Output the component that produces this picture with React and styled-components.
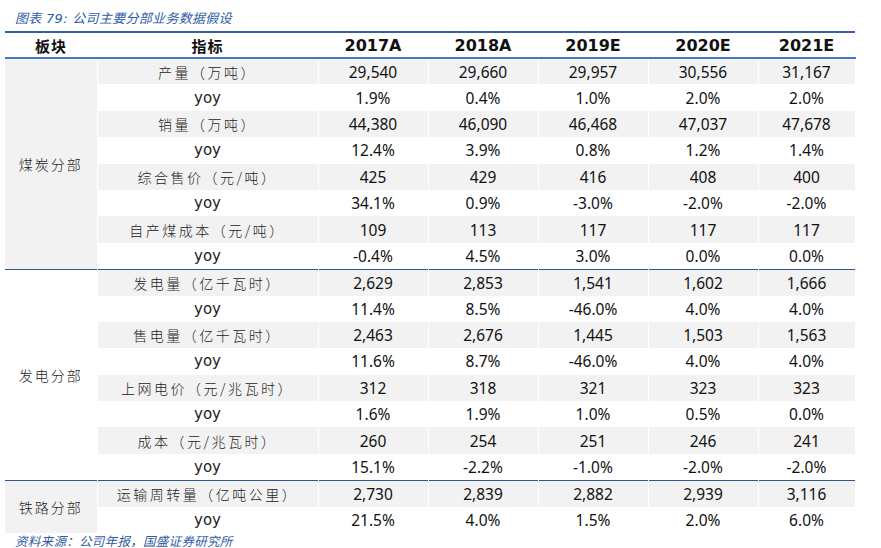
import React from 'react'
import styled, { createGlobalStyle } from 'styled-components'

const Global = createGlobalStyle`
  body {
    margin: 0;
    background: #fff;
    font-family: "Noto Sans", "Noto Sans CJK SC", sans-serif;
  }
`

const Page = styled.div`
  width: 881px;
  height: 548px;
  overflow: hidden;
`

const Caption = styled.div`
  height: 31px;
  box-sizing: border-box;
  padding: 10px 0 0 15px;
  font-family: "DejaVu Sans", "Noto Sans CJK SC", sans-serif;
  font-style: italic;
  font-size: 13px;
  line-height: 18px;
  color: #2f5ca6;
  letter-spacing: 0.3px;
`

const Table = styled.table`
  margin-left: 5px;
  width: 850px;
  border-collapse: collapse;
  table-layout: fixed;
`

const Col = styled.col`
  width: ${p => p.$w}px;
`

const HeadCell = styled.th`
  height: 24px;
  padding: 0;
  text-align: center;
  font-weight: 700;
  font-size: ${p => (p.$cn ? '15px' : '16px')};
  font-family: ${p =>
    p.$cn ? '"Noto Sans CJK SC", sans-serif' : '"DejaVu Sans", sans-serif'};
  letter-spacing: ${p => (p.$cn ? '1px' : '0')};
  color: #111;
  border-top: 2px solid #36609f;
  border-bottom: 2px solid #4a78c0;
`

const Section = styled.tbody`
  border-top: ${p => (p.$first ? 'none' : '1.5px solid #33558f')};
`

const Row = styled.tr`
  height: 26.4px;
  background: ${p => (p.$shade ? '#f2f2f2' : '#fff')};
`

const Group = styled.td`
  padding: 0;
  text-align: center;
  background: ${p => (p.$shade ? '#f2f2f2' : '#fff')};
  font-family: "Noto Sans CJK SC", sans-serif;
  font-weight: 300;
  font-size: 14px;
  letter-spacing: 2px;
  color: #222;
  border-right: 1px solid #fff;
`

const Label = styled.td`
  padding: 0;
  text-align: center;
  color: #222;
  border-right: 1px solid #fff;
  font-family: ${p =>
    p.$cn ? '"Noto Sans CJK SC", sans-serif' : '"DejaVu Sans", sans-serif'};
  font-weight: ${p => (p.$cn ? 300 : 400)};
  font-size: ${p => (p.$cn ? '14px' : '15px')};
  letter-spacing: ${p => (p.$cn ? '2.5px' : '0')};
`

const Value = styled.td`
  padding: 0;
  text-align: center;
  font-family: "Noto Sans", sans-serif;
  font-size: 15.5px;
  color: #111;
  border-right: 1px solid #fff;
`

const Note = styled.div`
  padding: 1px 0 0 15px;
  font-family: "DejaVu Sans", "Noto Sans CJK SC", sans-serif;
  font-style: italic;
  font-size: 12.5px;
  line-height: 16px;
  color: #2f5ca6;
  letter-spacing: 0.3px;
`

const widths = [92, 221, 110, 110, 110, 110, 97]
const years = ['2017A', '2018A', '2019E', '2020E', '2021E']

const sections = [
  {
    name: '煤炭分部',
    shade: true,
    rows: [
      ['产量（万吨）', '29,540', '29,660', '29,957', '30,556', '31,167'],
      ['yoy', '1.9%', '0.4%', '1.0%', '2.0%', '2.0%'],
      ['销量（万吨）', '44,380', '46,090', '46,468', '47,037', '47,678'],
      ['yoy', '12.4%', '3.9%', '0.8%', '1.2%', '1.4%'],
      ['综合售价（元/吨）', '425', '429', '416', '408', '400'],
      ['yoy', '34.1%', '0.9%', '-3.0%', '-2.0%', '-2.0%'],
      ['自产煤成本（元/吨）', '109', '113', '117', '117', '117'],
      ['yoy', '-0.4%', '4.5%', '3.0%', '0.0%', '0.0%'],
    ],
  },
  {
    name: '发电分部',
    shade: false,
    rows: [
      ['发电量（亿千瓦时）', '2,629', '2,853', '1,541', '1,602', '1,666'],
      ['yoy', '11.4%', '8.5%', '-46.0%', '4.0%', '4.0%'],
      ['售电量（亿千瓦时）', '2,463', '2,676', '1,445', '1,503', '1,563'],
      ['yoy', '11.6%', '8.7%', '-46.0%', '4.0%', '4.0%'],
      ['上网电价（元/兆瓦时）', '312', '318', '321', '323', '323'],
      ['yoy', '1.6%', '1.9%', '1.0%', '0.5%', '0.0%'],
      ['成本（元/兆瓦时）', '260', '254', '251', '246', '241'],
      ['yoy', '15.1%', '-2.2%', '-1.0%', '-2.0%', '-2.0%'],
    ],
  },
  {
    name: '铁路分部',
    shade: true,
    rows: [
      ['运输周转量（亿吨公里）', '2,730', '2,839', '2,882', '2,939', '3,116'],
      ['yoy', '21.5%', '4.0%', '1.5%', '2.0%', '6.0%'],
    ],
  },
]

export default function App() {
  return (
    <Page>
      <Global />
      <Caption>图表 79: 公司主要分部业务数据假设</Caption>
      <Table>
        <colgroup>
          {widths.map((w, i) => (
            <Col key={i} $w={w} />
          ))}
        </colgroup>
        <thead>
          <tr>
            <HeadCell $cn>板块</HeadCell>
            <HeadCell $cn>指标</HeadCell>
            {years.map(y => (
              <HeadCell key={y}>{y}</HeadCell>
            ))}
          </tr>
        </thead>
        {sections.map((s, si) => (
          <Section key={s.name} $first={si === 0}>
            {s.rows.map((r, ri) => (
              <Row key={ri} $shade={ri % 2 === 0}>
                {ri === 0 && (
                  <Group rowSpan={s.rows.length} $shade={s.shade}>
                    {s.name}
                  </Group>
                )}
                <Label $cn={r[0] !== 'yoy'}>{r[0]}</Label>
                {r.slice(1).map((v, vi) => (
                  <Value key={vi}>{v}</Value>
                ))}
              </Row>
            ))}
          </Section>
        ))}
      </Table>
      <Note>资料来源：公司年报，国盛证券研究所</Note>
    </Page>
  )
}
